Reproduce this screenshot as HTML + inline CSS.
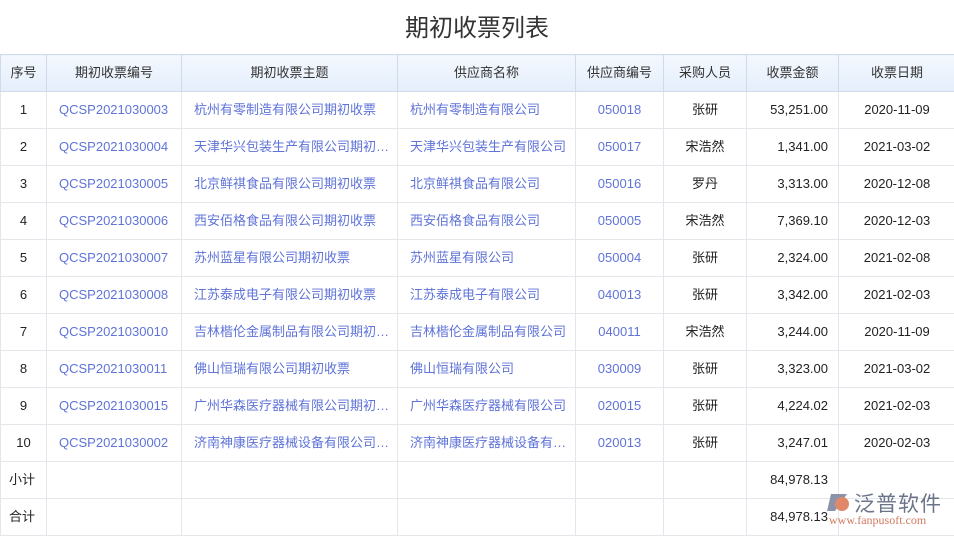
<!DOCTYPE html>
<html><head><meta charset="utf-8"><style>
body{margin:0;width:954px;height:536px;background:#fff;font-family:"Liberation Sans","Noto Sans CJK SC",sans-serif;overflow:hidden;position:relative}
.t{position:absolute;top:8px;left:0;width:954px;text-align:center;font-size:24px;color:#333}
table{position:absolute;top:54px;left:0;border-collapse:collapse;table-layout:fixed;width:955px;font-size:13px;color:#222}
tr{height:37px}
td,th{border:1px solid #e3e6ea;padding:0 6px 1px;white-space:nowrap;overflow:hidden;text-overflow:ellipsis;line-height:15px}
th{font-weight:normal;background:linear-gradient(#f4f8fe,#e4eefb);border-color:#cfdbea;color:#333}
td{text-align:center}
.l{color:#5f73d8;text-align:left;padding-left:12px}
.c{color:#5f73d8}
.r{text-align:right;padding-right:10px}
.s{text-align:left;padding-left:8px}
.logo{position:absolute;left:825px;top:491px}
</style></head><body>
<div class="t">期初收票列表</div>
<table>
<colgroup><col style="width:46px"><col style="width:135px"><col style="width:216px"><col style="width:178px"><col style="width:88px"><col style="width:83px"><col style="width:92px"><col style="width:117px"></colgroup>
<tr><th>序号</th><th>期初收票编号</th><th>期初收票主题</th><th>供应商名称</th><th>供应商编号</th><th>采购人员</th><th>收票金额</th><th>收票日期</th></tr>
<tr><td>1</td><td class="l">QCSP2021030003</td><td class="l">杭州有零制造有限公司期初收票</td><td class="l">杭州有零制造有限公司</td><td class="c">050018</td><td>张研</td><td class="r">53,251.00</td><td>2020-11-09</td></tr>
<tr><td>2</td><td class="l">QCSP2021030004</td><td class="l">天津华兴包装生产有限公司期初收票</td><td class="l">天津华兴包装生产有限公司</td><td class="c">050017</td><td>宋浩然</td><td class="r">1,341.00</td><td>2021-03-02</td></tr>
<tr><td>3</td><td class="l">QCSP2021030005</td><td class="l">北京鲜祺食品有限公司期初收票</td><td class="l">北京鲜祺食品有限公司</td><td class="c">050016</td><td>罗丹</td><td class="r">3,313.00</td><td>2020-12-08</td></tr>
<tr><td>4</td><td class="l">QCSP2021030006</td><td class="l">西安佰格食品有限公司期初收票</td><td class="l">西安佰格食品有限公司</td><td class="c">050005</td><td>宋浩然</td><td class="r">7,369.10</td><td>2020-12-03</td></tr>
<tr><td>5</td><td class="l">QCSP2021030007</td><td class="l">苏州蓝星有限公司期初收票</td><td class="l">苏州蓝星有限公司</td><td class="c">050004</td><td>张研</td><td class="r">2,324.00</td><td>2021-02-08</td></tr>
<tr><td>6</td><td class="l">QCSP2021030008</td><td class="l">江苏泰成电子有限公司期初收票</td><td class="l">江苏泰成电子有限公司</td><td class="c">040013</td><td>张研</td><td class="r">3,342.00</td><td>2021-02-03</td></tr>
<tr><td>7</td><td class="l">QCSP2021030010</td><td class="l">吉林楷伦金属制品有限公司期初收票</td><td class="l">吉林楷伦金属制品有限公司</td><td class="c">040011</td><td>宋浩然</td><td class="r">3,244.00</td><td>2020-11-09</td></tr>
<tr><td>8</td><td class="l">QCSP2021030011</td><td class="l">佛山恒瑞有限公司期初收票</td><td class="l">佛山恒瑞有限公司</td><td class="c">030009</td><td>张研</td><td class="r">3,323.00</td><td>2021-03-02</td></tr>
<tr><td>9</td><td class="l">QCSP2021030015</td><td class="l">广州华森医疗器械有限公司期初收票</td><td class="l">广州华森医疗器械有限公司</td><td class="c">020015</td><td>张研</td><td class="r">4,224.02</td><td>2021-02-03</td></tr>
<tr><td>10</td><td class="l">QCSP2021030002</td><td class="l">济南神康医疗器械设备有限公司期初收票</td><td class="l">济南神康医疗器械设备有限公司</td><td class="c">020013</td><td>张研</td><td class="r">3,247.01</td><td>2020-02-03</td></tr>
<tr><td class="s">小计</td><td></td><td></td><td></td><td></td><td></td><td class="r">84,978.13</td><td></td></tr>
<tr><td class="s">合计</td><td></td><td></td><td></td><td></td><td></td><td class="r">84,978.13</td><td></td></tr>
</table>
<div class="logo">
<svg width="28" height="26" style="position:absolute;left:0;top:0"><path d="M6 3 L22 3 L10 20 L2 20 Z" fill="#8a93aa"/><circle cx="17" cy="13" r="7" fill="#e0896a"/></svg>
<div style="position:absolute;left:29px;top:-1px;font-size:21px;color:#6b7488;letter-spacing:1px;white-space:nowrap;font-family:'Noto Sans CJK SC',sans-serif;line-height:26px">泛普软件</div>
<div style="position:absolute;left:4px;top:22px;font-size:12px;color:#d07a60;white-space:nowrap;font-family:'Liberation Serif',serif">www.fanpusoft.com</div>
</div>
</body></html>
